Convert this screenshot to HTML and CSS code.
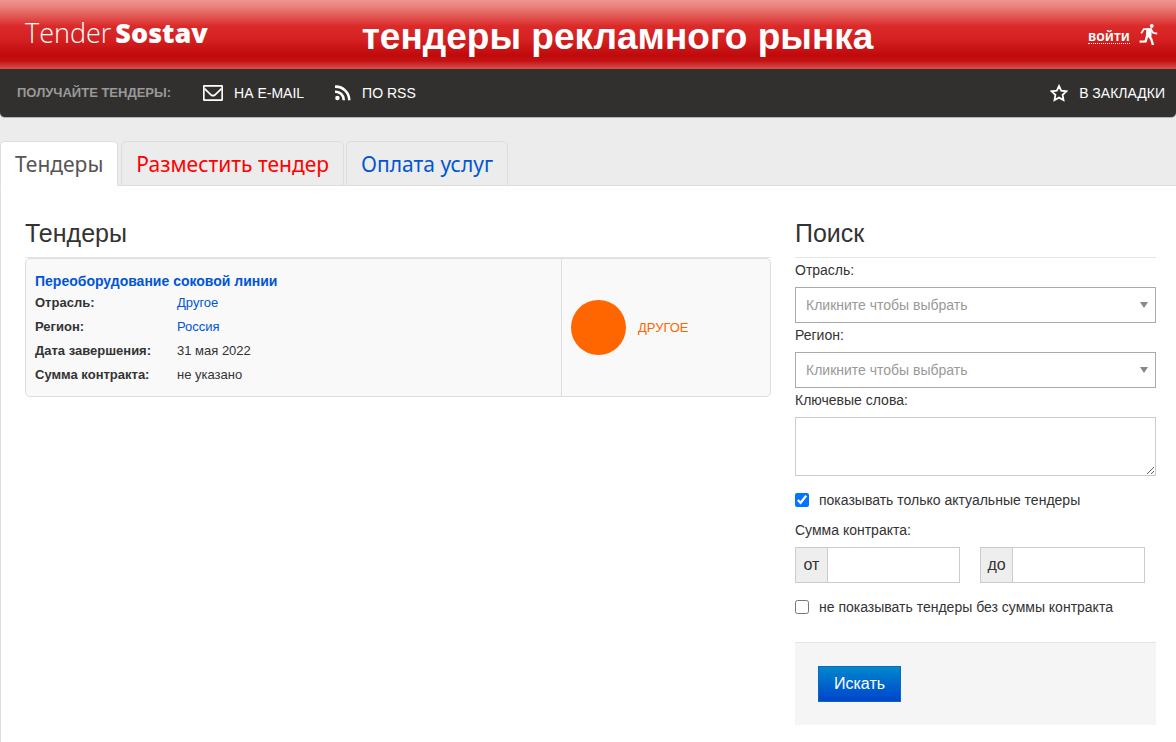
FILE: index.html
```html
<!DOCTYPE html>
<html lang="ru">
<head>
<meta charset="utf-8">
<meta name="viewport" content="width=device-width, initial-scale=1">
<title>TenderSostav</title>
<link rel="stylesheet" href="styles.css">
</head>
<body>
<header class="banner">
  <a class="logo" href="#">Tender<b>Sostav</b></a>
  <h1 class="slogan">тендеры рекламного рынка</h1>
  <a class="login" href="#"><span class="login-text">войти</span>
    <svg class="login-icon" viewBox="0 0 19 22" width="19" height="22" aria-hidden="true">
      <circle cx="12.8" cy="2" r="1.9" fill="#fff"/>
      <path d="M7.4 4.2 12.8 4.4 12.4 13 6.8 13Z" fill="#fff"/>
      <path d="M2.2 9.4 4.8 5.2 12 5.2 14 8.8 18.2 9.6" fill="none" stroke="#fff" stroke-width="1.8"/>
      <path d="M8.4 11 6.6 17.4 .6 17.6M9.6 11.6 12.2 15 14 21" fill="none" stroke="#fff" stroke-width="2.4"/>
    </svg>
  </a>
</header>
<nav class="toolbar">
  <span class="toolbar-title">Получайте тендеры:</span>
  <a class="tool" href="#">
    <svg width="20" height="16" viewBox="0 0 20 16" fill="none" stroke="#fff" stroke-width="1.7" aria-hidden="true"><rect x=".8" y=".8" width="18.4" height="14.4" rx=".6"/><path d="M1.5 3.6 8.2 10Q10 11.4 11.8 10L18.5 3.6"/></svg>
    <span>НА E-MAIL</span></a>
  <a class="tool" href="#">
    <svg width="16" height="16" viewBox="0 0 16 16" fill="none" stroke="#fff" stroke-width="2.6" aria-hidden="true"><circle cx="2.4" cy="13" r="2.2" fill="#fff" stroke="none"/><path d="M0 6.8A8.2 8.2 0 0 1 8.8 15.2M0 1.7A13.4 13.4 0 0 1 14.2 15.2"/></svg>
    <span>ПО RSS</span></a>
  <a class="tool tool-end" href="#">
    <svg width="18" height="18" viewBox="0 0 18 18" fill="none" stroke="#fff" stroke-width="1.8" stroke-linejoin="miter" aria-hidden="true"><path d="M9 2 11.2 6.6 16.3 7.3 12.6 10.9 13.5 16 9 13.6 4.5 16 5.4 10.9 1.7 7.3 6.8 6.6Z"/></svg>
    <span>В ЗАКЛАДКИ</span></a>
</nav>
<nav class="tabs">
  <a class="tab tab-active" href="#">Тендеры</a>
  <a class="tab tab-hot" href="#">Разместить тендер</a>
  <a class="tab" href="#">Оплата услуг</a>
</nav>
<main class="content">
  <section class="list">
    <h2 class="heading">Тендеры</h2>
    <article class="card">
      <div class="card-info">
        <a class="card-title" href="#">Переоборудование соковой линии</a>
        <dl class="facts">
          <dt>Отрасль:</dt><dd><a href="#">Другое</a></dd>
          <dt>Регион:</dt><dd><a href="#">Россия</a></dd>
          <dt>Дата завершения:</dt><dd>31 мая 2022</dd>
          <dt>Сумма контракта:</dt><dd>не указано</dd>
        </dl>
      </div>
      <div class="card-category"><span class="dot"></span><span>ДРУГОЕ</span></div>
    </article>
  </section>
  <form class="search">
    <h2 class="heading">Поиск</h2>
    <label class="label" for="industry">Отрасль:</label>
    <div class="picker"><select class="select" id="industry"><option>Кликните чтобы выбрать</option></select></div>
    <label class="label" for="region">Регион:</label>
    <div class="picker"><select class="select" id="region"><option>Кликните чтобы выбрать</option></select></div>
    <label class="label" for="keywords">Ключевые слова:</label>
    <textarea class="keywords" id="keywords"></textarea>
    <label class="check"><input type="checkbox" checked><span>показывать только актуальные тендеры</span></label>
    <div class="sum-title" id="sum-title">Сумма контракта:</div>
    <div class="sums" role="group" aria-labelledby="sum-title">
      <div class="sum"><label class="addon" for="from">от</label><input class="sum-input" id="from" type="text"></div>
      <div class="sum"><label class="addon" for="to">до</label><input class="sum-input" id="to" type="text"></div>
    </div>
    <label class="check"><input type="checkbox"><span>не показывать тендеры без суммы контракта</span></label>
    <div class="actions"><button class="submit" type="submit">Искать</button></div>
  </form>
</main>
</body>
</html>
```

FILE: styles.css
```css
* { box-sizing: border-box; }
body {
  margin: 0;
  min-height: 100vh;
  display: flex;
  flex-direction: column;
  background: #ececec;
  color: #333;
  font: 14px/20px "Liberation Sans", Arial, sans-serif;
}
a { color: #0055d5; text-decoration: none; }

.banner {
  display: grid;
  grid-template-columns: 336fr auto 284fr;
  align-items: center;
  height: 69px;
  padding: 0 18px 0 25px;
  background: linear-gradient(#ee9590 0, #ea807c 10%, #db2a29 38%, #d42021 58%, #c00a0b 80%, #c41112 88%, #dc5050 100%);
  color: #fff;
}
.logo { padding-bottom: 4px; color: #fff; font: 300 27px/32px "Open Sans", sans-serif; }
.logo b { font-weight: 800; margin-left: 4px; }
.slogan { margin: 0; padding-top: 4px; font-size: 37px; line-height: 44px; font-weight: bold; }
.login { display: flex; justify-content: flex-end; align-items: center; gap: 9px; color: #fff; }
.login-text { margin-top: 3px; border-bottom: 1px dotted #fff; font: 600 14px/14px "Noto Sans", sans-serif; }

.toolbar {
  display: flex;
  align-items: center;
  height: 49px;
  padding: 0 11px 0 17px;
  border-bottom: 1px solid #b5b5b5;
  border-radius: 0 0 5px 5px;
  background: #32302f;
}
.toolbar-title { margin-right: 32px; color: #999; font-size: 13px; font-weight: bold; text-transform: uppercase; }
.tool { display: flex; align-items: center; gap: 11px; margin-right: 31px; color: #fff; }
.tool-end { margin: 0 0 0 auto; }

.tabs {
  display: flex;
  gap: 2px;
  margin-top: 23px;
  border-bottom: 1px solid #ddd;
}
.tab {
  margin-bottom: -1px;
  padding: 8px 14px 7px;
  border: 1px solid #ddd;
  border-radius: 5px 5px 0 0;
  font: 21px/28px "Noto Sans", sans-serif;
}
.tab-active { margin-right: 1px; background: #fff; border-bottom-color: #fff; color: #555; }
.tab-hot { color: #f00; }

.content {
  flex: 1;
  display: grid;
  grid-template-columns: minmax(0, 746fr) minmax(0, 361fr);
  gap: 24px;
  padding: 30px 20px 17px 24px;
  border-left: 1px solid #ddd;
  background: #fff;
}
.heading { margin: 0; padding-bottom: 6px; border-bottom: 1px solid #e5e5e5; font-size: 25px; line-height: 35px; font-weight: normal; }

.card { display: grid; grid-template-columns: 535fr 209fr; border: 1px solid #ddd; border-radius: 5px; background: #f9f9f9; }
.card-info { padding: 12px 9px 9px; }
.card-category { display: flex; align-items: center; gap: 12px; padding-left: 9px; border-left: 1px solid #ddd; color: #f60; font-size: 13px; }
.card-title { display: block; font-weight: bold; }
.facts { display: grid; grid-template-columns: 142px 1fr; margin: 0; font-size: 13px; line-height: 24px; }
.facts dt { font-weight: bold; }
.facts dd { margin: 0; }
.dot { width: 55px; height: 55px; border-radius: 50%; background: #f60; }

.label { display: block; padding: 2px 0 7px; }
.picker { position: relative; }
.picker::after {
  content: "";
  position: absolute;
  right: 8px;
  top: 15px;
  border: 4px solid transparent;
  border-top: 6px solid #888;
  border-bottom: 0;
  pointer-events: none;
}
.select {
  display: block;
  width: 100%;
  height: 36px;
  padding: 0 10px;
  border: 1px solid #aaa;
  border-radius: 0;
  background: #fff;
  color: #999;
  font: inherit;
  appearance: none;
}
.keywords { display: block; width: 100%; height: 59px; border: 1px solid #ccc; background: #fff; font: inherit; }
.check { display: flex; align-items: center; gap: 10px; margin-top: 14px; }
.check input { width: 14px; height: 14px; margin: 0; }
.sum-title { margin: 10px 0 7px; }
.sums { display: flex; gap: 20px; padding-right: 11px; }
.sum { flex: 1; display: flex; height: 36px; min-width: 0; border: 1px solid #ccc; }
.addon { flex: none; width: 32px; border-right: 1px solid #ccc; background: #eee; line-height: 34px; text-align: center; font-size: 16px; }
.sum-input { flex: 1; min-width: 0; border: 0; font: inherit; }
.actions { margin-top: 25px; padding: 23px; border-top: 1px solid #e5e5e5; background: #f5f5f5; }
.submit {
  display: block;
  padding: 8px 15px;
  border: 1px solid #0b66c4;
  background: linear-gradient(#08c, #04c);
  color: #fff;
  font: 16px/18px "Liberation Sans", Arial, sans-serif;
}
```
